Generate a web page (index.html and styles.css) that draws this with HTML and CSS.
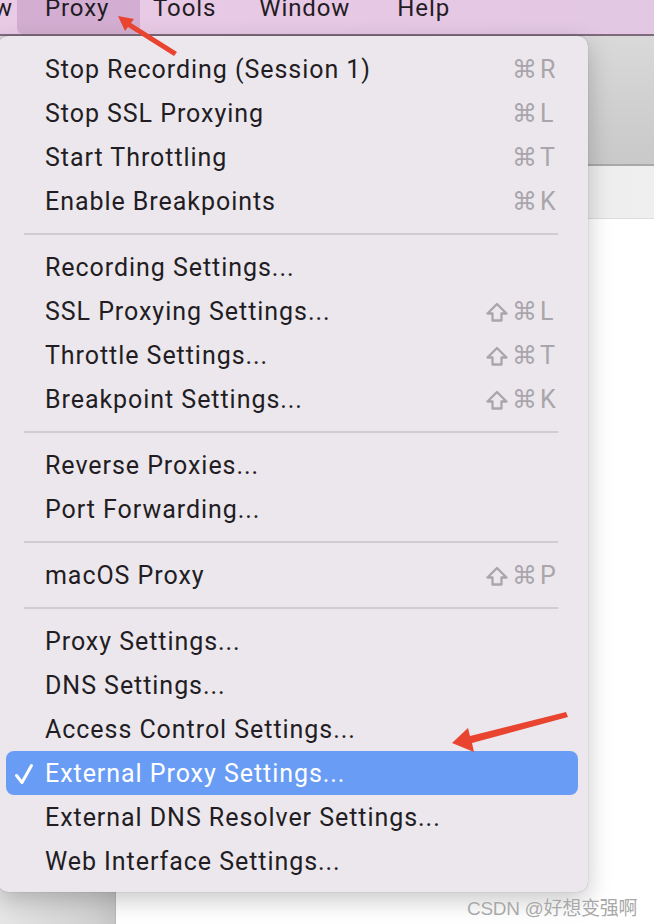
FILE: index.html
```html
<!DOCTYPE html>
<html>
<head>
<meta charset="utf-8">
<link rel="stylesheet" href="styles.css">
</head>
<body>
<div class="screen">
  <div class="menubar">
    <span class="mb-item mb-prev">w</span>
    <span class="mb-item mb-active">Proxy</span>
    <span class="mb-item mb-tools">Tools</span>
    <span class="mb-item mb-window">Window</span>
    <span class="mb-item">Help</span>
  </div>
  <div class="window">
    <div class="toolbar"></div>
    <div class="tabs"></div>
    <div class="content">
      <div class="sidebar"></div>
      <div class="main"></div>
    </div>
  </div>

  <div class="menu">
    <div class="item"><span class="label">Stop Recording (Session 1)</span><span class="keys"><span class="cmd">⌘</span><span class="key">R</span></span></div>
    <div class="item"><span class="label">Stop SSL Proxying</span><span class="keys"><span class="cmd">⌘</span><span class="key">L</span></span></div>
    <div class="item"><span class="label">Start Throttling</span><span class="keys"><span class="cmd">⌘</span><span class="key">T</span></span></div>
    <div class="item"><span class="label">Enable Breakpoints</span><span class="keys"><span class="cmd">⌘</span><span class="key">K</span></span></div>
    <div class="sep"></div>
    <div class="item"><span class="label">Recording Settings...</span></div>
    <div class="item"><span class="label">SSL Proxying Settings...</span><span class="keys"><svg class="shift" width="22" height="20" viewBox="0 0 22 20"><path d="M11 2 L20.5 11.5 H15.5 V18.5 H6.5 V11.5 H1.5 Z"/></svg><span class="cmd">⌘</span><span class="key">L</span></span></div>
    <div class="item"><span class="label">Throttle Settings...</span><span class="keys"><svg class="shift" width="22" height="20" viewBox="0 0 22 20"><path d="M11 2 L20.5 11.5 H15.5 V18.5 H6.5 V11.5 H1.5 Z"/></svg><span class="cmd">⌘</span><span class="key">T</span></span></div>
    <div class="item"><span class="label">Breakpoint Settings...</span><span class="keys"><svg class="shift" width="22" height="20" viewBox="0 0 22 20"><path d="M11 2 L20.5 11.5 H15.5 V18.5 H6.5 V11.5 H1.5 Z"/></svg><span class="cmd">⌘</span><span class="key">K</span></span></div>
    <div class="sep"></div>
    <div class="item"><span class="label">Reverse Proxies...</span></div>
    <div class="item"><span class="label">Port Forwarding...</span></div>
    <div class="sep"></div>
    <div class="item"><span class="label">macOS Proxy</span><span class="keys"><svg class="shift" width="22" height="20" viewBox="0 0 22 20"><path d="M11 2 L20.5 11.5 H15.5 V18.5 H6.5 V11.5 H1.5 Z"/></svg><span class="cmd">⌘</span><span class="key">P</span></span></div>
    <div class="sep"></div>
    <div class="item"><span class="label">Proxy Settings...</span></div>
    <div class="item"><span class="label">DNS Settings...</span></div>
    <div class="item"><span class="label">Access Control Settings...</span></div>
    <div class="item selected"><svg class="check" width="20" height="22" viewBox="0 0 20 22"><path d="M2.5 12.5 L8 19.5 L17.5 2.5"/></svg><span class="label">External Proxy Settings...</span></div>
    <div class="item"><span class="label">External DNS Resolver Settings...</span></div>
    <div class="item"><span class="label">Web Interface Settings...</span></div>
  </div>

  <div class="watermark">CSDN @好想变强啊</div>

  <svg class="arrows" width="654" height="924" viewBox="0 0 654 924">
    <polygon fill="#e8442f" points="177,52 174,56 128,27 125,31 118,16 134,19 131,23"/>
    <polygon fill="#e8442f" points="566,712 568,717 472,743 474,752 452,743 468,728 470,736"/>
  </svg>
</div>
</body>
</html>
```

FILE: styles.css
```css
html, body {
  margin: 0;
  padding: 0;
}
body {
  width: 654px;
  height: 924px;
  overflow: hidden;
  font-family: Roboto, "Liberation Sans", "Noto Sans CJK SC", sans-serif;
}
.screen {
  position: relative;
  width: 654px;
  height: 924px;
  overflow: hidden;
  background: #ffffff;
  display: flex;
  flex-direction: column;
}
.menubar {
  height: 34px;
  flex: none;
  display: flex;
  align-items: flex-start;
  background: linear-gradient(90deg, #e9cbe6 0%, #e6c8e4 60%, #e3c8e3 100%);
  border-bottom: 2px solid #7d6a7c;
}
.mb-item {
  font-size: 24px;
  line-height: 22px;
  letter-spacing: 0.9px;
  color: #241c24;
  margin-top: -3px;
  height: 37px;
  display: flex;
  align-items: flex-start;
  box-sizing: border-box;
  white-space: nowrap;
}
.mb-prev {
  width: 23px;
  margin-left: -6px;
  overflow: hidden;
}
.mb-active {
  background: #d3aed2;
  border-radius: 0 0 6px 6px;
  padding: 0 0 0 28px;
  width: 123px;
  margin-right: 13px;
}
.mb-tools {
  margin-right: 43px;
}
.mb-window {
  margin-right: 47px;
}
.window {
  flex: 1;
  display: flex;
  flex-direction: column;
}
.toolbar {
  height: 128px;
  flex: none;
  background: linear-gradient(180deg, #d9d9d9 0%, #cfcfcf 60%, #c9c9c9 100%);
  border-bottom: 2px solid #a9a9a9;
}
.tabs {
  height: 52px;
  flex: none;
  background: linear-gradient(90deg, #e6e6e6 0%, #efefef 100%);
  border-bottom: 1px solid #dcdcdc;
}
.content {
  flex: 1;
  display: flex;
}
.sidebar {
  width: 115px;
  flex: none;
  background: linear-gradient(90deg, #e6e6e6 0%, #d2d2d2 80%, #c6c6c6 100%);
  border-right: 1px solid #b9b9b9;
}
.main {
  flex: 1;
  background: #ffffff;
}

.menu {
  position: absolute;
  left: -2px;
  top: 36px;
  width: 590px;
  box-sizing: border-box;
  padding: 11px 0 9px;
  background: #ece7ed;
  border-radius: 10px;
  box-shadow: 0 8px 24px rgba(0,0,0,0.22), 0 0 1px rgba(0,0,0,0.35);
}
.item {
  height: 44px;
  display: flex;
  align-items: center;
  padding: 0 30px 0 47px;
  font-size: 25px;
  color: #221d23;
  position: relative;
}
.label {
  flex: 1;
  white-space: nowrap;
  letter-spacing: 0.95px;
}
.keys {
  display: flex;
  align-items: center;
  color: #a9a5ab;
  font-size: 25px;
}
.shift {
  fill: none;
  stroke: #a9a5ab;
  stroke-width: 2.3;
  stroke-linejoin: round;
  margin-right: 4px;
  margin-top: 1px;
}
.cmd {
  font-family: "DejaVu Sans", sans-serif;
  font-size: 25px;
  margin-right: 3px;
}
.key {
  width: 18px;
}
.sep {
  height: 2px;
  margin: 10px 30px 10px 26px;
  background: #d0ccd1;
}
.selected {
  color: #ffffff;
}
.selected::before {
  content: "";
  position: absolute;
  left: 8px;
  right: 10px;
  top: 0;
  bottom: 0;
  background: #699cf5;
  border-radius: 8px;
}
.selected .label {
  position: relative;
}
.check {
  position: absolute;
  left: 16px;
  top: 12px;
  fill: none;
  stroke: #ffffff;
  stroke-width: 3;
  stroke-linecap: round;
  stroke-linejoin: round;
}
.watermark {
  position: absolute;
  left: 467px;
  top: 893px;
  font-size: 19px;
  color: #a8a8a8;
  letter-spacing: -0.3px;
  font-family: "Liberation Sans", "Noto Sans CJK SC", sans-serif;
  text-shadow: 0 0 1px #ffffff;
}
.arrows {
  position: absolute;
  left: 0;
  top: 0;
  pointer-events: none;
}
```
